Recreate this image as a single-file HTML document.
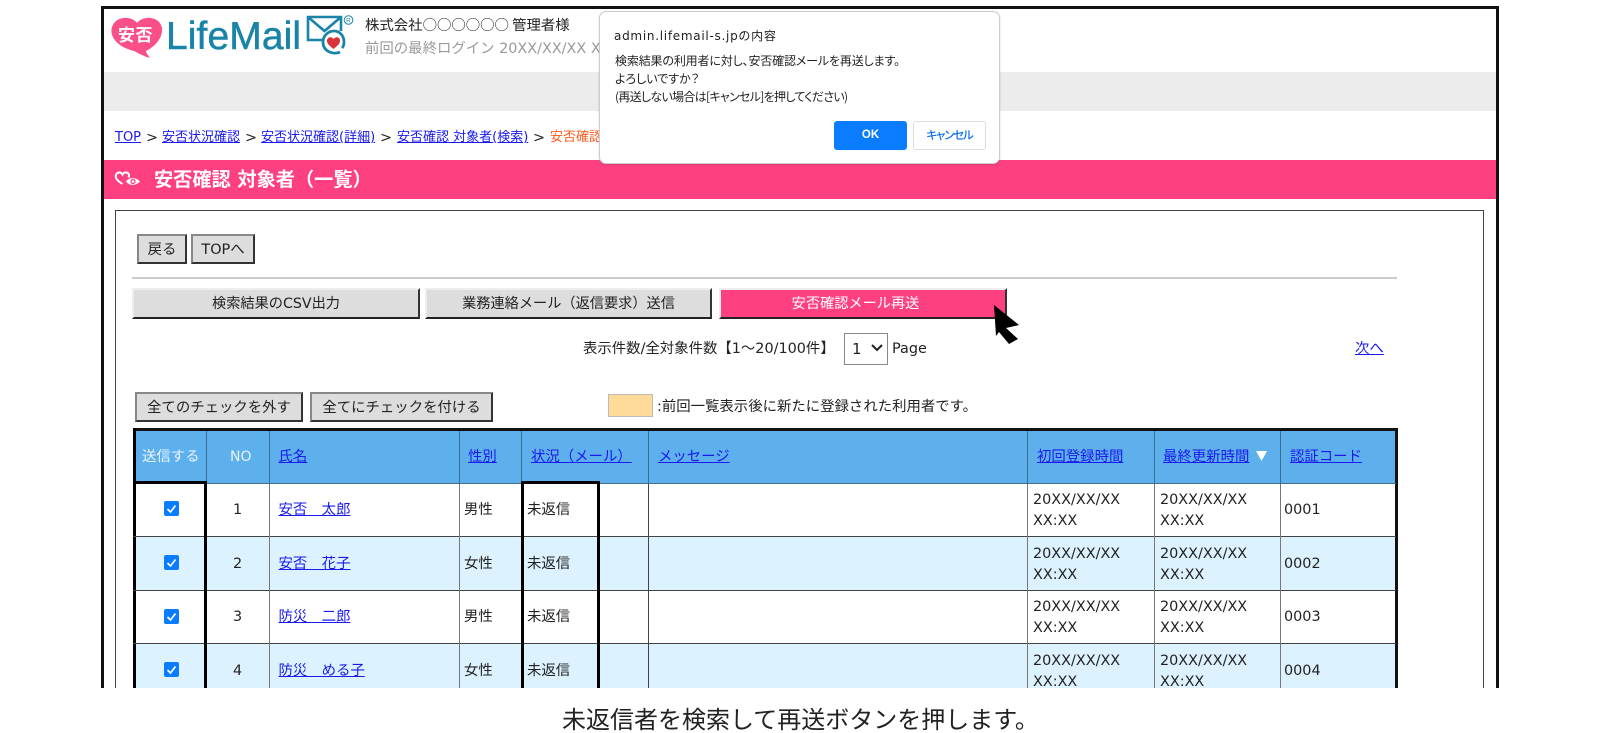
<!DOCTYPE html>
<html lang="ja"><head><meta charset="utf-8"><title>LifeMail</title>
<style>
html,body{margin:0;padding:0;width:1600px;height:733px;overflow:hidden;background:#fff}
body{position:relative;font-family:"DejaVu Sans","Noto Sans CJK JP",sans-serif;font-size:14.4px;color:#222}
div,a{position:absolute;white-space:nowrap;box-sizing:border-box}
a{color:#1a1aee;text-decoration:underline}
.t{height:20px;line-height:20px}
.btn{background:#ddd;border:2px solid;border-color:#888 #333 #333 #888;text-align:center;color:#222}
.big{background:#ddd;border:2px solid;border-color:#eee #333 #222 #eee;top:288px;height:31px;line-height:29px;text-align:center;color:#222;font-size:14.2px}
.v{top:484px;height:204px;width:1px;background:#777}
.vb{top:481px;height:207px;width:3px;background:#000}
.h{left:133px;width:1263px;height:1px;background:#444}
.hl{top:431px;width:1px;height:53px;background:#3f6f8f}
.th{top:447px}
.cb{left:164px;width:15px;height:15px;background:#0a7cff;border-radius:2px}
.bc{top:128px;font-size:13px}
.gt{top:128px}
svg{position:absolute;display:block}
</style></head><body>

<!-- frame -->
<div style="left:101px;top:6px;width:1398px;height:682px;border:3px solid #111;border-bottom:0"></div>
<div style="left:104px;top:72px;width:1392px;height:39px;background:#ececec"></div>

<!-- logo -->
<svg style="left:110px;top:16px" width="54" height="44" viewBox="0 0 54 44"><path d="M27 7C22 0 6-1 2 11C-1 21 8 31 24 35C28 37 33 40 40 42C38 39 36 37 36 35C46 30 53 21 52 12C50 0 33-1 27 7Z" fill="#fb4f88"/></svg>
<div style="left:118px;top:24px;height:20px;line-height:20px;font-size:17px;font-weight:700;color:#fff;font-family:'Noto Sans CJK JP',sans-serif;letter-spacing:.5px">安否</div>
<div style="left:166px;top:14px;height:46px;line-height:46px;font-size:39px;color:#1a84a8;font-family:'Liberation Sans',sans-serif;-webkit-text-stroke:.5px #1a84a8;letter-spacing:.1px">LifeMail</div>
<svg style="left:305px;top:14px" width="55" height="46" viewBox="0 0 55 46"><path d="M19 26H3V3H36V17M3 3L19.500 17L36 3" fill="none" stroke="#1a84a8" stroke-width="2.600"/><path d="M35 38C29 41 18 38 18 28C18 21 24 17 29 17C35 17 39 22 39 28C39 31 38 33 37 34" fill="none" stroke="#1a84a8" stroke-width="2.800"/><path d="M28.500 35C24 31.500 21.500 29 22 26C23 22.500 27 22.500 28.500 25C30 22.500 34.500 22.500 35 26C35.500 29 33 31.500 28.500 35Z" fill="#d8353b"/><circle cx="43.500" cy="6" r="4.300" fill="none" stroke="#1a84a8" stroke-width="1"/><text x="43.500" y="8.400" font-size="6.500" text-anchor="middle" fill="#1a84a8" font-family="Liberation Sans">R</text></svg>

<!-- header text -->
<div class="t" style="left:365px;top:15px;font-family:'Noto Sans CJK JP',sans-serif;font-size:14.4px">株式会社○○○○○○ 管理者様</div>
<div class="t" style="left:365px;top:39px;color:#9a9a9a">前回の最終ログイン 20XX/XX/XX XX:XX</div>

<!-- breadcrumb -->
<a class="t bc" style="left:115px">TOP</a><div class="t gt" style="left:146px">&gt;</div>
<a class="t bc" style="left:162px">安否状況確認</a><div class="t gt" style="left:245px">&gt;</div>
<a class="t bc" style="left:261px">安否状況確認(詳細)</a><div class="t gt" style="left:380px">&gt;</div>
<a class="t bc" style="left:397px">安否確認 対象者(検索)</a><div class="t gt" style="left:533px">&gt;</div>
<div class="t bc" style="left:550px;color:#ff5a1f">安否確認 対象者(一覧)</div>

<!-- title band -->
<div style="left:104px;top:160px;width:1392px;height:39px;background:#ff4080"></div>
<svg style="left:114px;top:170px" width="28" height="18" viewBox="0 0 28 18"><path d="M8.500 14C3 10.500 1 8 2 5C3 2 7 1.500 8.500 4.500C10 1.500 14.500 2 15 5C15.200 6 15 6.500 14.500 7.500" fill="none" stroke="#fff" stroke-width="2"/><path d="M12 11.500C15 7 22 7 26 11.500C22 16 15 16 12 11.500Z" fill="#fff"/><circle cx="19" cy="11.500" r="2.600" fill="#ff4080"/><circle cx="19" cy="11.500" r="1.300" fill="#fff"/></svg>
<div style="left:154px;top:167px;height:26px;line-height:26px;font-size:19.2px;font-weight:700;color:#fff">安否確認 対象者（一覧）</div>

<!-- inner box -->
<div style="left:115px;top:210px;width:1369px;height:478px;border:1px solid #444;border-bottom:0"></div>

<div class="btn" style="left:137px;top:234px;width:50px;height:30px;line-height:28px">戻る</div>
<div class="btn" style="left:191px;top:234px;width:64px;height:30px;line-height:28px">TOPへ</div>
<div style="left:132px;top:277px;width:1265px;height:2px;background:#ccc"></div>

<div class="big" style="left:132px;width:288px">検索結果のCSV出力</div>
<div class="big" style="left:425px;width:287px">業務連絡メール（返信要求）送信</div>
<div class="big" style="left:719px;width:288px;background:#ff4080;color:#fff;padding-right:15px">安否確認メール再送</div>

<!-- cursor -->
<svg style="left:986px;top:300px" width="40" height="50" viewBox="0 0 40 50"><path d="M8 5L33 25L20 28L32 39L23 44L13 32L10 36Z" fill="#000"/></svg>

<!-- paging -->
<div class="t" style="left:583px;top:339px">表示件数/全対象件数【1〜20/100件】</div>
<div style="left:844px;top:333px;width:44px;height:32px;border:1px solid #888;background:#fff"></div>
<div class="t" style="left:852px;top:339px;font-size:15px">1</div>
<svg style="left:870px;top:343px" width="14" height="10" viewBox="0 0 14 10"><path d="M2 2L7 7L12 2" fill="none" stroke="#222" stroke-width="2"/></svg>
<div class="t" style="left:892px;top:339px">Page</div>
<a class="t" style="left:1355px;top:339px">次へ</a>

<div class="btn" style="left:135px;top:392px;width:168px;height:30px;line-height:28px">全てのチェックを外す</div>
<div class="btn" style="left:310px;top:392px;width:183px;height:30px;line-height:28px">全てにチェックを付ける</div>
<div style="left:608px;top:394px;width:45px;height:23px;background:#ffdb99;border:1px solid #bbb"></div>
<div class="t" style="left:657px;top:397px">:前回一覧表示後に新たに登録された利用者です。</div>

<!-- table -->
<div style="left:133px;top:428px;width:1265px;height:56px;background:#5db0eb"></div>
<div style="left:135px;top:536px;width:1261px;height:54px;background:#dcf3ff"></div>
<div style="left:135px;top:643px;width:1261px;height:45px;background:#dcf3ff"></div>
<div style="left:133px;top:428px;width:1265px;height:3px;background:#111"></div>
<div style="left:133px;top:428px;width:3px;height:260px;background:#000"></div>
<div style="left:1395px;top:428px;width:3px;height:260px;background:#111"></div>
<div style="left:133px;top:483px;width:1263px;height:1px;background:#3f6f8f"></div>
<div class="h" style="top:536px"></div>
<div class="h" style="top:590px"></div>
<div class="h" style="top:643px"></div>
<div class="hl" style="left:206px"></div>
<div class="hl" style="left:269px"></div>
<div class="hl" style="left:459px"></div>
<div class="hl" style="left:521px"></div>
<div class="hl" style="left:648px"></div>
<div class="hl" style="left:1027px"></div>
<div class="hl" style="left:1154px"></div>
<div class="hl" style="left:1280px"></div>
<div class="v" style="left:269px"></div>
<div class="v" style="left:459px"></div>
<div class="v" style="left:648px;background:#444"></div>
<div class="v" style="left:1027px"></div>
<div class="v" style="left:1154px"></div>
<div class="v" style="left:1280px"></div>
<div class="vb" style="left:204px"></div>
<div class="vb" style="left:521px"></div>
<div class="vb" style="left:597px"></div>
<div style="left:133px;top:481px;width:74px;height:3px;background:#000"></div>
<div style="left:521px;top:481px;width:79px;height:3px;background:#000"></div>

<div class="t th" style="left:142px;color:#e8f4ff">送信する</div>
<div class="t th" style="left:230px;color:#e8f4ff;font-size:14px">NO</div>
<a class="t th" style="left:278.500px">氏名</a>
<a class="t th" style="left:468px">性別</a>
<a class="t th" style="left:531px">状況（メール）</a>
<a class="t th" style="left:658px">メッセージ</a>
<a class="t th" style="left:1037px">初回登録時間</a>
<a class="t th" style="left:1163px">最終更新時間</a>
<svg style="left:1255px;top:450px" width="13" height="11" viewBox="0 0 13 11"><path d="M1 1H12L6.500 11Z" fill="#fff"/></svg>
<a class="t th" style="left:1290px">認証コード</a>

<!-- row 1 -->
<div class="cb" style="top:501px"><svg width="15" height="15" viewBox="0 0 15 15"><path d="M3.500 8L6.500 11L11.500 4.500" fill="none" stroke="#fff" stroke-width="1.700"/></svg></div>
<div class="t" style="left:233px;top:500px">1</div>
<a class="t" style="left:278.500px;top:500px">安否　太郎</a>
<div class="t" style="left:464px;top:500px">男性</div>
<div class="t" style="left:527px;top:500px">未返信</div>
<div class="t" style="left:1033px;top:490px">20XX/XX/XX</div><div class="t" style="left:1033px;top:511px">XX:XX</div>
<div class="t" style="left:1160px;top:490px">20XX/XX/XX</div><div class="t" style="left:1160px;top:511px">XX:XX</div>
<div class="t" style="left:1284px;top:500px">0001</div>

<!-- row 2 -->
<div class="cb" style="top:555px"><svg width="15" height="15" viewBox="0 0 15 15"><path d="M3.500 8L6.500 11L11.500 4.500" fill="none" stroke="#fff" stroke-width="1.700"/></svg></div>
<div class="t" style="left:233px;top:554px">2</div>
<a class="t" style="left:278.500px;top:554px">安否　花子</a>
<div class="t" style="left:464px;top:554px">女性</div>
<div class="t" style="left:527px;top:554px">未返信</div>
<div class="t" style="left:1033px;top:544px">20XX/XX/XX</div><div class="t" style="left:1033px;top:565px">XX:XX</div>
<div class="t" style="left:1160px;top:544px">20XX/XX/XX</div><div class="t" style="left:1160px;top:565px">XX:XX</div>
<div class="t" style="left:1284px;top:554px">0002</div>

<!-- row 3 -->
<div class="cb" style="top:609px"><svg width="15" height="15" viewBox="0 0 15 15"><path d="M3.500 8L6.500 11L11.500 4.500" fill="none" stroke="#fff" stroke-width="1.700"/></svg></div>
<div class="t" style="left:233px;top:607px">3</div>
<a class="t" style="left:278.500px;top:607px">防災　二郎</a>
<div class="t" style="left:464px;top:607px">男性</div>
<div class="t" style="left:527px;top:607px">未返信</div>
<div class="t" style="left:1033px;top:597px">20XX/XX/XX</div><div class="t" style="left:1033px;top:618px">XX:XX</div>
<div class="t" style="left:1160px;top:597px">20XX/XX/XX</div><div class="t" style="left:1160px;top:618px">XX:XX</div>
<div class="t" style="left:1284px;top:607px">0003</div>

<!-- row 4 -->
<div class="cb" style="top:662px"><svg width="15" height="15" viewBox="0 0 15 15"><path d="M3.500 8L6.500 11L11.500 4.500" fill="none" stroke="#fff" stroke-width="1.700"/></svg></div>
<div class="t" style="left:233px;top:661px">4</div>
<a class="t" style="left:278.500px;top:661px">防災　める子</a>
<div class="t" style="left:464px;top:661px">女性</div>
<div class="t" style="left:527px;top:661px">未返信</div>
<div class="t" style="left:1033px;top:651px">20XX/XX/XX</div><div class="t" style="left:1033px;top:672px">XX:XX</div>
<div class="t" style="left:1160px;top:651px">20XX/XX/XX</div><div class="t" style="left:1160px;top:672px">XX:XX</div>
<div class="t" style="left:1284px;top:661px">0004</div>

<!-- bottom mask + caption -->
<div style="left:0;top:688px;width:1600px;height:45px;background:#fff"></div>
<div style="left:562px;top:700px;height:36px;line-height:36px;font-size:24px;color:#222;font-family:'Noto Sans CJK JP',sans-serif">未返信者を検索して再送ボタンを押します。</div>

<!-- dialog -->
<div style="left:599px;top:11px;width:401px;height:153px;background:#fff;border:1px solid #ccc;border-radius:7px;box-shadow:0 1px 2px rgba(0,0,0,.15)"></div>
<div style="left:614px;top:26px;height:20px;line-height:20px;font-size:12px;color:#222;letter-spacing:.72px;font-family:'DejaVu Sans','Noto Sans CJK JP',sans-serif">admin.lifemail-s.jpの内容</div>
<div style="left:615px;top:52px;height:18px;line-height:18px;font-size:12px;color:#222;letter-spacing:-.15px;font-feature-settings:'palt';font-family:'Noto Sans CJK JP',sans-serif">検索結果の利用者に対し、安否確認メールを再送します。</div>
<div style="left:615px;top:70px;height:18px;line-height:18px;font-size:12px;color:#222;font-feature-settings:'palt';font-family:'Noto Sans CJK JP',sans-serif">よろしいですか？</div>
<div style="left:615px;top:88px;height:18px;line-height:18px;font-size:12px;color:#222;letter-spacing:-.7px;font-feature-settings:'palt';font-family:'Noto Sans CJK JP',sans-serif">(再送しない場合は[キャンセル]を押してください)</div>
<div style="left:834px;top:121px;width:73px;height:29px;line-height:29px;background:#0a7cff;border-radius:3px;color:#fff;text-align:center;font-size:11.500px;font-family:'Liberation Sans',sans-serif;font-weight:700">OK</div>
<div style="left:913px;top:121px;width:73px;height:29px;line-height:27px;background:#fff;border:1px solid #ddd;border-radius:3px;color:#0a6fe8;text-align:center;font-size:11.500px;font-weight:500;letter-spacing:-1.2px;font-feature-settings:'palt';font-family:'Noto Sans CJK JP',sans-serif">キャンセル</div>

</body></html>
